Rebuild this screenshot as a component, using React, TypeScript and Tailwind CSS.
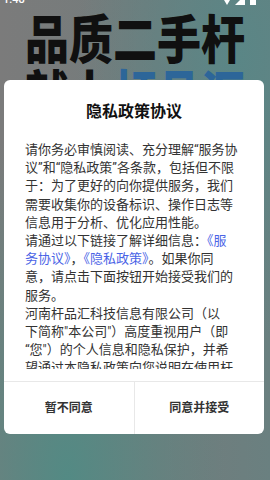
export default function App() {
  return (
    <div className="relative h-[480px] w-[270px] overflow-hidden bg-[#787878] bg-[radial-gradient(ellipse_at_88%_12%,#5a8686_0%,transparent_48%),radial-gradient(ellipse_at_25%_100%,#538a84_0%,transparent_55%),linear-gradient(90deg,#7b7b7b_0%,#727c7c_60%,#6a8080_100%)] font-['Roboto','Noto_Sans_CJK_SC',sans-serif]">
      {/* status bar (mostly off screen) */}
      <div className="flex h-[5px] items-end justify-between overflow-hidden px-[3px]">
        <span className="text-[11px] leading-[11px] font-medium text-white">1:48</span>
        <div className="mr-[11px] flex items-end gap-[2px]">
          <svg width="12" height="10" viewBox="0 0 12 10" className="block">
            <path d="M0 0 L12 0 L6 10 Z" fill="#fff" />
          </svg>
          <svg width="10" height="10" viewBox="0 0 10 10" className="block">
            <path d="M10 0 L10 10 L0 10 Z" fill="#fff" />
          </svg>
          <svg width="6" height="10" viewBox="0 0 6 10" className="ml-[3px] block">
            <rect x="0" y="0" width="6" height="10" fill="#fff" />
            <rect x="1.5" y="0" width="3" height="5" fill="#6a8080" />
          </svg>
        </div>
      </div>

      {/* underlying page heading */}
      <div className="mt-[13px] origin-top scale-y-[1.18] text-center text-[44px] leading-[40px] font-black text-[#101010]">
        <div>品质二手杆</div>
        <div className="mt-[6px]">
          <span>就上</span>
          <span className="text-[#2d6699]">杆品汇</span>
        </div>
      </div>

      {/* dialog */}
      <div className="absolute left-[4px] top-[80px] flex w-[260px] flex-col rounded-[6px] bg-white">
        <div className="pt-[21px] text-center text-[16px] leading-[22px] font-bold text-[#111]">
          隐私政策协议
        </div>
        <div className="mt-[18px] h-[228px] overflow-hidden px-[21px] text-[13px] leading-[18.2px] text-[#333]">
          <div>
            请你务必审慎阅读、充分理解“服务协
            <br />
            议”和“隐私政策”各条款，包括但不限
            <br />
            于：为了更好的向你提供服务，我们
            <br />
            需要收集你的设备标识、操作日志等
            <br />
            信息用于分析、优化应用性能。
          </div>
          <div>
            请通过以下链接了解详细信息：<span className="text-[#4a63e6]">《服</span>
            <br />
            <span className="text-[#4a63e6]">务协议》</span>，<span className="text-[#4a63e6]">《隐私政策》</span>。如果你同
            <br />
            意，请点击下面按钮开始接受我们的
            <br />
            服务。
          </div>
          <div>
            河南杆品汇科技信息有限公司（以
            <br />
            下简称"本公司"）高度重视用户（即
            <br />
            “您"）的个人信息和隐私保护，并希
            <br />
            望通过本隐私政策向您说明在使用杆
            <br />
            品汇服务时，我们如何收集、使用、
            <br />
            保存、共享和转让这些信息。
          </div>
        </div>
        <div className="mt-[12px] flex h-[53px] border-t border-[#e8e8e8]">
          <div className="flex flex-1 items-center justify-center text-[12px] font-bold text-[#333]">
            暂不同意
          </div>
          <div className="flex flex-1 items-center justify-center border-l border-[#e8e8e8] text-[12px] font-bold text-[#333]">
            同意并接受
          </div>
        </div>
      </div>
    </div>
  );
}
